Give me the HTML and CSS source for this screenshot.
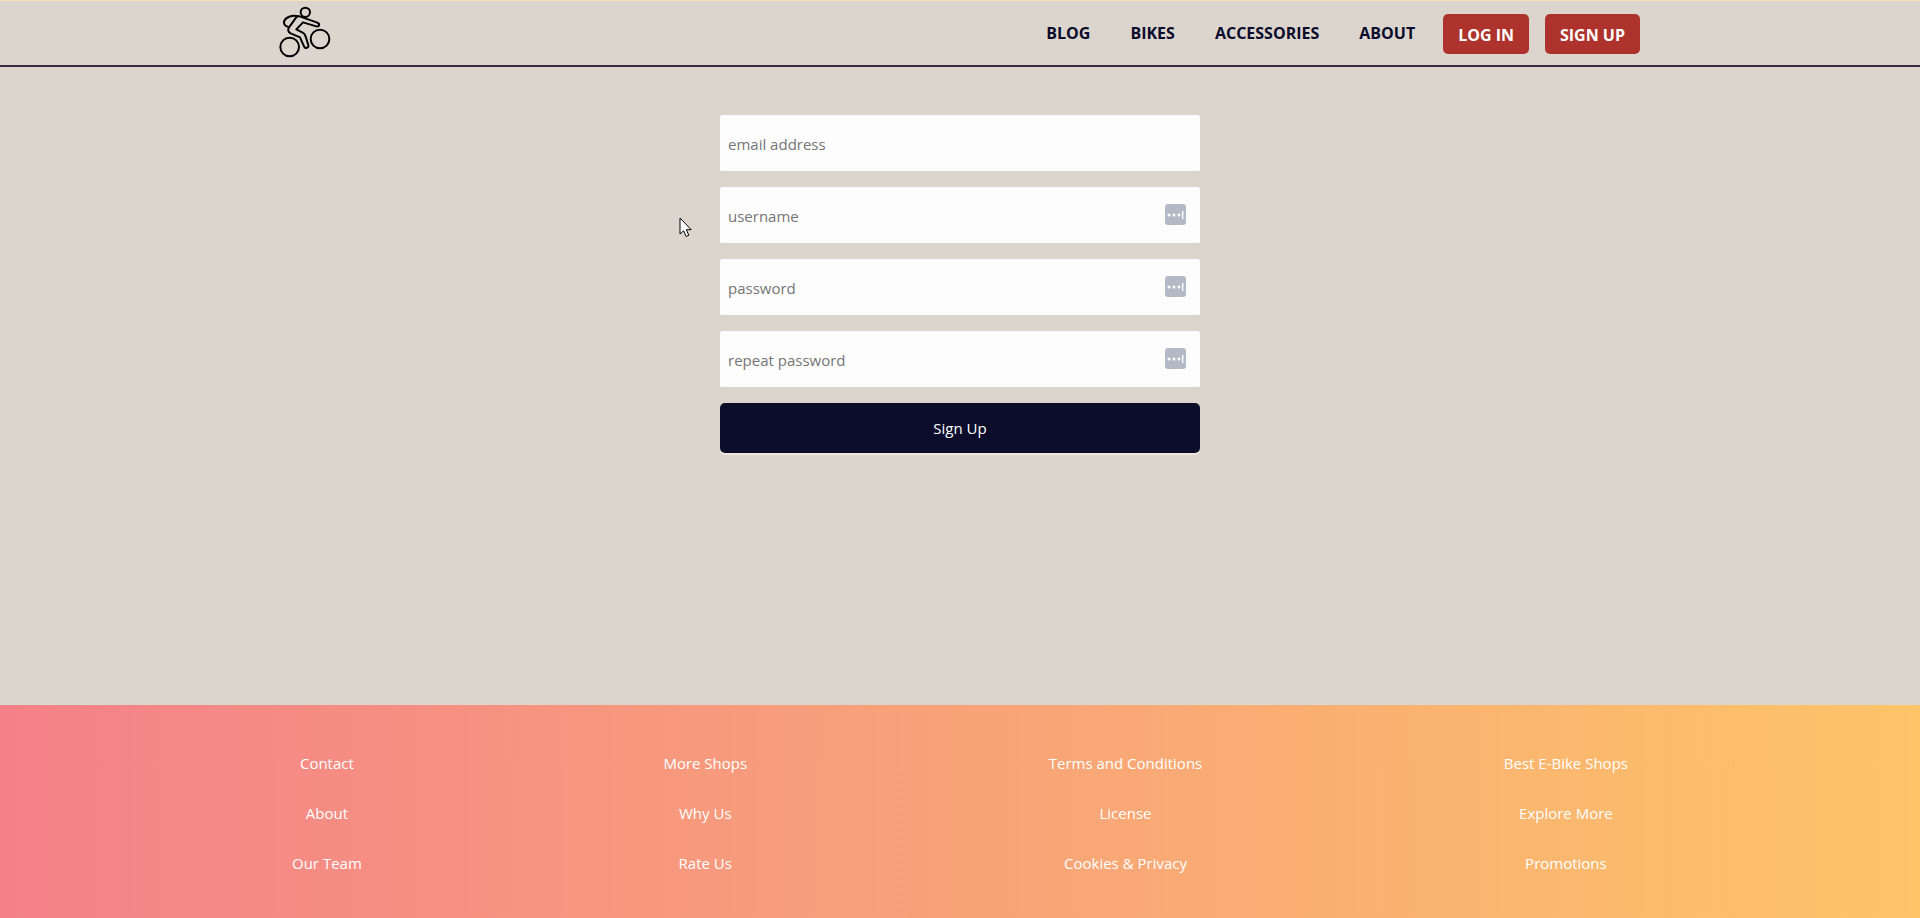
FILE: index.html
```html
<!DOCTYPE html>
<html lang="en">
<head>
<meta charset="utf-8">
<title>Sign Up</title>
<link rel="stylesheet" href="styles.css">
</head>
<body>
<header class="navbar">
  <div class="container navbar-inner">
    <a href="#" class="logo" aria-label="Home">
      <svg viewBox="60 24 150 150" fill="none" stroke="#000" stroke-width="6" stroke-linecap="round" stroke-linejoin="round">
        <circle cx="89" cy="141" r="28"/>
        <circle cx="180" cy="117" r="28"/>
        <circle cx="136" cy="37" r="14"/>
        <path d="M113 49C96 44 76 52 72 65C71 74 77 79 86 81"/>
        <path d="M119 49L172 68C181 72 178 81 169 79L129 67L109 88L128 98Q134 101 136 107L145 135C147 144 135 147 132 139L120 112L92 100C84 96 83 89 87 82L108 53Q112 47 119 49Z"/>
      </svg>
    </a>
    <nav class="menu">
      <ul class="links">
        <li><a href="#">BLOG</a></li>
        <li><a href="#">BIKES</a></li>
        <li><a href="#">ACCESSORIES</a></li>
        <li><a href="#">ABOUT</a></li>
      </ul>
      <div class="actions">
        <button type="button" class="btn">LOG IN</button>
        <button type="button" class="btn">SIGN UP</button>
      </div>
    </nav>
  </div>
</header>
<main class="main">
  <form class="form">
    <div class="field"><input type="email" placeholder="email address" aria-label="email address"></div>
    <div class="field">
      <input type="text" placeholder="username" aria-label="username">
      <svg class="key" viewBox="0 0 21 21"><rect width="21" height="21" rx="3" fill="#b3bac6"/><g fill="#fff"><circle cx="4" cy="11" r="1.5"/><circle cx="9" cy="11" r="1.5"/><circle cx="14" cy="11" r="1.5"/><rect x="17" y="7" width="1.4" height="8"/></g></svg>
    </div>
    <div class="field">
      <input type="password" placeholder="password" aria-label="password">
      <svg class="key" viewBox="0 0 21 21"><rect width="21" height="21" rx="3" fill="#b3bac6"/><g fill="#fff"><circle cx="4" cy="11" r="1.5"/><circle cx="9" cy="11" r="1.5"/><circle cx="14" cy="11" r="1.5"/><rect x="17" y="7" width="1.4" height="8"/></g></svg>
    </div>
    <div class="field">
      <input type="password" placeholder="repeat password" aria-label="repeat password">
      <svg class="key" viewBox="0 0 21 21"><rect width="21" height="21" rx="3" fill="#b3bac6"/><g fill="#fff"><circle cx="4" cy="11" r="1.5"/><circle cx="9" cy="11" r="1.5"/><circle cx="14" cy="11" r="1.5"/><rect x="17" y="7" width="1.4" height="8"/></g></svg>
    </div>
    <button type="submit" class="submit">Sign Up</button>
    <svg class="pointer" viewBox="0 0 13 21"><path d="M1 1V17L4.600 13.800L7.200 19.500L9.800 18.300L7.400 12.700H12.200Z" fill="#fff" stroke="#000"/></svg>
  </form>
</main>
<footer class="footer">
  <div class="container footer-inner">
    <ul class="column">
      <li><a href="#">Contact</a></li>
      <li><a href="#">About</a></li>
      <li><a href="#">Our Team</a></li>
    </ul>
    <ul class="column">
      <li><a href="#">More Shops</a></li>
      <li><a href="#">Why Us</a></li>
      <li><a href="#">Rate Us</a></li>
    </ul>
    <ul class="column">
      <li><a href="#">Terms and Conditions</a></li>
      <li><a href="#">License</a></li>
      <li><a href="#">Cookies &amp; Privacy</a></li>
    </ul>
    <ul class="column">
      <li><a href="#">Best E-Bike Shops</a></li>
      <li><a href="#">Explore More</a></li>
      <li><a href="#">Promotions</a></li>
    </ul>
  </div>
</footer>
</body>
</html>
```
FILE: styles.css
```css
* {
  box-sizing: border-box;
}

body {
  margin: 0;
  min-height: 100vh;
  display: flex;
  flex-direction: column;
  background: #dcd5cd;
  color: #0b0b2b;
  font: 15px/24px "Segoe UI", "Open Sans", "Noto Sans", sans-serif;
}

ul {
  list-style: none;
  margin: 0;
  padding: 0;
}

a {
  color: inherit;
  text-decoration: none;
}

button,
input {
  font: inherit;
}

.container {
  width: 100%;
  max-width: 1400px;
  margin: 0 auto;
  padding: 0 20px;
}

.navbar {
  border-top: 1px solid #f3e3b5;
  border-bottom: 2px solid #3a2a48;
}

.navbar-inner {
  display: flex;
  justify-content: space-between;
  align-items: center;
  min-height: 64px;
}

.logo,
.logo svg {
  display: block;
  width: 50px;
  height: 50px;
}

.logo svg {
  overflow: visible;
}

.menu,
.links,
.actions {
  display: flex;
  align-items: center;
}

.menu {
  gap: 28px;
  font-size: 16px;
  font-weight: 700;
}

.links {
  gap: 40px;
}

.actions {
  gap: 16px;
  padding-top: 2px;
}

.btn {
  height: 40px;
  padding: 2px 15px 0;
  border: 0;
  border-radius: 5px;
  background: #ad332c;
  color: #fff;
}

.main {
  flex: 1;
  padding: 48px 20px;
}

.form {
  position: relative;
  display: flex;
  flex-direction: column;
  gap: 16px;
  max-width: 480px;
  margin: 0 auto;
}

.field {
  position: relative;
}

.field input {
  display: block;
  width: 100%;
  height: 56px;
  padding: 2px 8px 0;
  border: 0;
  border-radius: 2px;
  background: #fdfdfd;
}

.field input::placeholder {
  color: #757575;
}

.key {
  position: absolute;
  top: 17px;
  right: 14px;
  width: 21px;
  height: 21px;
}

.submit {
  height: 50px;
  border: 0;
  border-radius: 5px;
  background: #0c0d2b;
  color: #fff;
  box-shadow: 0 2px 0 #f0e6dc;
}

.pointer {
  position: absolute;
  top: 102px;
  left: -41px;
  width: 13px;
  height: 21px;
}

.footer {
  padding: 34px 0 29px;
  background: linear-gradient(to right, #f48189, #fdc468);
  color: #fff;
}

.footer-inner {
  display: flex;
  justify-content: space-between;
}

.column {
  padding: 0 12px;
  text-align: center;
}

.column li {
  padding: 12px 0 14px;
}
```
